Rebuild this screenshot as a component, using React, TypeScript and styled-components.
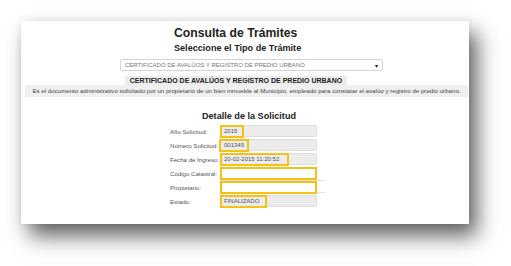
import React from "react";
import styled, { createGlobalStyle } from "styled-components";

const Global = createGlobalStyle`
  html, body { margin: 0; padding: 0; background: #ffffff; }
  body { font-family: "Liberation Sans", Arial, sans-serif; }
`;

const Page = styled.div`
  width: 511px;
  height: 266px;
  padding: 21px 0 0 21px;
  box-sizing: border-box;
  overflow: hidden;
`;

const Card = styled.div`
  width: 448px;
  height: 203px;
  background: #ffffff;
  box-shadow: 8px 12px 20px rgba(0, 0, 0, 0.62), 0 0 7px rgba(0, 0, 0, 0.08);
  display: flex;
  flex-direction: column;
  align-items: flex-start;
  padding-top: 5px;
  box-sizing: border-box;
`;

const Title = styled.h1<{ $left: number }>`
  margin: 0 0 0 ${(p) => p.$left}px;
  font-size: 12.2px;
  line-height: 15px;
  font-weight: bold;
  color: #222;
`;

const Subtitle = styled.h2<{ $left: number }>`
  margin: 1px 0 0 ${(p) => p.$left}px;
  font-size: 9.1px;
  line-height: 12px;
  font-weight: bold;
  color: #222;
`;

const Select = styled.div`
  margin: 5px 0 0 99px;
  width: 263px;
  height: 12px;
  border: 1px solid #d4d4d4;
  border-radius: 2px;
  box-sizing: border-box;
  display: flex;
  align-items: center;
  justify-content: space-between;
  padding: 0 4px 0 4px;
  font-size: 6px;
  color: #777;
`;

const Arrow = styled.span`
  font-size: 6px;
  color: #222;
`;

const Heading = styled.div`
  margin: 5px 0 0 104px;
  width: 222px;
  height: 9px;
  background: #ececec;
  font-size: 7px;
  line-height: 9px;
  font-weight: bold;
  color: #222;
  text-align: center;
`;

const Description = styled.div`
  margin-left: 4px;
  width: 443px;
  height: 12px;
  background: #efefef;
  font-size: 6.15px;
  line-height: 12px;
  color: #444;
  text-align: center;
  white-space: nowrap;
`;

const SectionTitle = styled.h3`
  margin: 13px 0 0 181px;
  font-size: 9.1px;
  line-height: 12px;
  font-weight: bold;
  color: #222;
`;

const Form = styled.div`
  margin: 3px 0 0 149px;
  display: flex;
  flex-direction: column;
  gap: 2px;
`;

const Row = styled.div`
  display: grid;
  grid-template-columns: 50px 97px;
  align-items: center;
  height: 12px;
`;

const Label = styled.span`
  font-size: 6.1px;
  color: #555;
  white-space: nowrap;
`;

const Field = styled.div`
  position: relative;
  height: 12px;
`;

const Input = styled.div<{ $blank?: boolean }>`
  height: 12px;
  box-sizing: border-box;
  background: ${(p) => (p.$blank ? "#ffffff" : "#ececec")};
  border: 1px solid #dedede;
  border-radius: 2px;
  font-size: 6px;
  line-height: 10px;
  color: #555;
  padding-left: 3px;
  white-space: nowrap;
`;

const Highlight = styled.div<{ $w: number; $x?: number }>`
  position: absolute;
  top: -0.5px;
  left: ${(p) => p.$x ?? 0}px;
  width: ${(p) => p.$w}px;
  height: 13px;
  border: 2px solid #f5c116;
  box-sizing: border-box;
`;

const Extra = styled.div`
  position: absolute;
  top: -1px;
  left: 0;
  width: 105px;
  height: 13px;
  border-top: 1px solid #e2e2e2;
  border-bottom: 1px solid #e2e2e2;
  box-sizing: border-box;
`;

const rows = [
  { label: "Año Solicitud:", value: "2015", hl: 24 },
  { label: "Número Solicitud:", value: "001349", hl: 30, x: -1 },
  { label: "Fecha de Ingreso:", value: "20-02-2015 11:20:52", hl: 69 },
  { label: "Código Catastral:", value: "", hl: 97, blank: true },
  { label: "Propietario:", value: "", hl: 97, blank: true, extra: true },
  { label: "Estado:", value: "FINALIZADO", hl: 47 },
];

export default function App() {
  return (
    <>
      <Global />
      <Page>
        <Card>
          <Title $left={153}>Consulta de Trámites</Title>
          <Subtitle $left={153}>Seleccione el Tipo de Trámite</Subtitle>
          <Select>
            <span>CERTIFICADO DE AVALÚOS Y REGISTRO DE PREDIO URBANO</span>
            <Arrow>▾</Arrow>
          </Select>
          <Heading>CERTIFICADO DE AVALÚOS Y REGISTRO DE PREDIO URBANO</Heading>
          <Description>
            Es el documento administrativo solicitado por un propietario de un bien inmueble al Municipio, empleado para constatar el avalúo y registro de predio urbano.
          </Description>
          <SectionTitle>Detalle de la Solicitud</SectionTitle>
          <Form>
            {rows.map((r) => (
              <Row key={r.label}>
                <Label>{r.label}</Label>
                <Field>
                  {r.extra && <Extra />}
                  <Input $blank={r.blank}>{r.value}</Input>
                  <Highlight $w={r.hl} $x={r.x} />
                </Field>
              </Row>
            ))}
          </Form>
        </Card>
      </Page>
    </>
  );
}
